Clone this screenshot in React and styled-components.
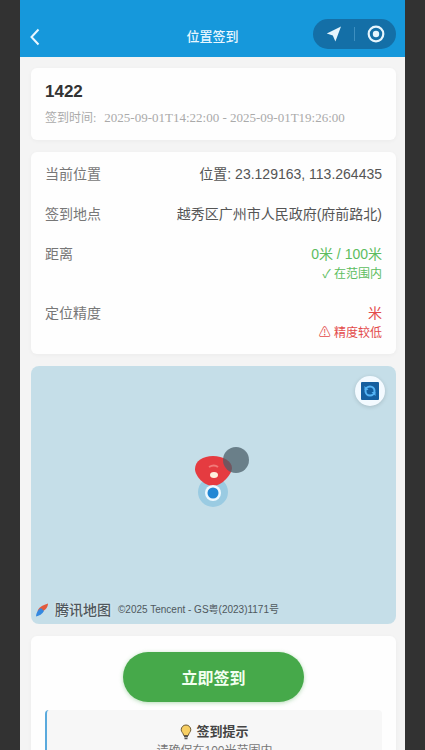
import React, { useState } from "react";
import styled, { createGlobalStyle } from "styled-components";

const GlobalStyle = createGlobalStyle`
  * {
    box-sizing: border-box;
  }
  body {
    margin: 0;
    background: #323232;
    font-family: "Liberation Sans", "Noto Sans CJK SC", sans-serif;
  }
  h1, h2, h3, p, dl, dd {
    margin: 0;
  }
  button {
    border: 0;
    padding: 0;
    font-family: inherit;
    cursor: pointer;
  }
`;

const Stage = styled.div`
  height: 100vh;
  padding: 0 20px;
  overflow-y: auto;
  scrollbar-width: none;
`;

const Screen = styled.div`
  min-height: 100%;
  background: #f4f4f4;
`;

const NavBar = styled.header`
  display: grid;
  grid-template-columns: 1fr auto 1fr;
  align-items: center;
  height: 57px;
  padding: 16px 9px 0;
  background: #1698db;
  color: #e9f7ff;
`;

const BackButton = styled.button`
  display: flex;
  width: 12px;
  background: none;
  color: inherit;
`;

const NavTitle = styled.h1`
  font-size: 13px;
  line-height: 18px;
  font-weight: 500;
`;

const Capsule = styled.div`
  justify-self: end;
  display: flex;
  align-items: center;
  height: 30px;
  margin-bottom: 6px;
  border-radius: 15px;
  background: #146fa7;
`;

const CapsuleButton = styled.button`
  display: flex;
  align-items: center;
  justify-content: center;
  width: 41px;
  height: 30px;
  background: none;
  color: #e6f5fd;
`;

const CapsuleLine = styled.span`
  width: 1px;
  height: 14px;
  background: #3d8fc0;
`;

const Content = styled.main`
  display: flex;
  flex-direction: column;
  gap: 12px;
  padding: 11px 9px 12px 11px;
`;

const Card = styled.section`
  padding: 12px 14px;
  border-radius: 6px;
  background: #fefefe;
  box-shadow: 0 1px 4px rgba(0, 0, 0, 0.04);
`;

const TaskName = styled.h2`
  margin-top: 2px;
  color: #333;
  font-size: 17px;
  line-height: 20px;
`;

const TaskTime = styled.p`
  display: flex;
  gap: 8px;
  margin: 8px 0 2px;
  color: #aaa;
  font-family: "Liberation Serif", "Noto Sans CJK SC", serif;
  font-size: 12px;
  line-height: 16px;
  white-space: nowrap;
`;

const TimeRange = styled.span`
  font-size: 13px;
`;

const InfoList = styled.dl`
  display: flex;
  flex-direction: column;
  gap: 20px;
`;

const InfoRow = styled.div`
  display: flex;
  justify-content: space-between;
  line-height: 20px;
  font-size: 14px;
`;

const InfoLabel = styled.dt`
  color: #777;
`;

const InfoValue = styled.dd`
  color: ${(props) => props.$color || "#555"};
  text-align: right;
`;

const Hint = styled.p`
  margin-bottom: -1px;
  font-size: 12px;
`;

const MapBox = styled.section`
  position: relative;
  height: 258px;
  border-radius: 8px;
  background: #c5dee8;
  overflow: hidden;
`;

const RefreshButton = styled.button`
  position: absolute;
  top: 10px;
  right: 11px;
  display: flex;
  align-items: center;
  justify-content: center;
  width: 30px;
  height: 30px;
  border-radius: 50%;
  background: #f3faff;
  box-shadow: 0 1px 4px rgba(0, 0, 0, 0.15);
`;

const Marker = styled.div`
  position: absolute;
  top: 75px;
  left: 50%;
  display: flex;
  width: 72px;
  margin-left: -36px;
`;

const MapCredit = styled.div`
  position: absolute;
  bottom: 4px;
  left: 3px;
  display: flex;
  align-items: center;
  gap: 5px;
  color: #4f585d;
  white-space: nowrap;
`;

const MapBrand = styled.span`
  font-size: 14px;
  line-height: 20px;
  font-weight: 500;
  text-shadow: 0 0 3px #eef5f8;
`;

const Copyright = styled.small`
  margin-left: 2px;
  font-size: 10px;
  line-height: 20px;
`;

const SignButton = styled.button`
  display: block;
  width: 54%;
  height: 50px;
  margin: 4px auto 8px;
  border-radius: 25px;
  background: #46a94a;
  box-shadow: 0 1px 4px rgba(70, 169, 74, 0.4);
  color: #f2fff0;
  font-size: 16px;
  font-weight: 700;
`;

const Tips = styled.div`
  padding: 12px;
  border-left: 2px solid #5aaadd;
  border-radius: 4px;
  background: #f7f7f7;
  text-align: center;
`;

const TipsTitle = styled.h3`
  display: flex;
  align-items: center;
  justify-content: center;
  gap: 4px;
  color: #444;
  font-size: 13px;
  line-height: 20px;
`;

const TipsText = styled.p`
  color: #777;
  font-size: 12px;
  line-height: 18px;
`;

const green = "#5cbd60";
const red = "#e34b4b";

const rows = [
  { label: "当前位置", value: "位置: 23.129163, 113.264435" },
  { label: "签到地点", value: "越秀区广州市人民政府(府前路北)" },
  { label: "距离", value: "0米 / 100米", hint: "✓ 在范围内", color: green },
  { label: "定位精度", value: "米", hint: "⚠ 精度较低", color: red },
];

export default function App() {
  const [signed, setSigned] = useState(false);

  return (
    <>
      <GlobalStyle />
      <Stage>
        <Screen>
          <NavBar>
            <BackButton aria-label="返回">
              <BackIcon />
            </BackButton>
            <NavTitle>位置签到</NavTitle>
            <Capsule>
              <CapsuleButton aria-label="定位">
                <ArrowIcon />
              </CapsuleButton>
              <CapsuleLine />
              <CapsuleButton aria-label="关闭">
                <TargetIcon />
              </CapsuleButton>
            </Capsule>
          </NavBar>
          <Content>
            <Card>
              <TaskName>1422</TaskName>
              <TaskTime>
                <span>签到时间:</span>
                <TimeRange>2025-09-01T14:22:00 - 2025-09-01T19:26:00</TimeRange>
              </TaskTime>
            </Card>
            <Card>
              <InfoList>
                {rows.map((row) => (
                  <InfoRow key={row.label}>
                    <InfoLabel>{row.label}</InfoLabel>
                    <InfoValue $color={row.color}>
                      {row.value}
                      {row.hint && <Hint>{row.hint}</Hint>}
                    </InfoValue>
                  </InfoRow>
                ))}
              </InfoList>
            </Card>
            <MapBox aria-label="地图">
              <RefreshButton aria-label="刷新">
                <RefreshIcon />
              </RefreshButton>
              <Marker>
                <MarkerIcon />
              </Marker>
              <MapCredit>
                <MapLogo />
                <MapBrand>腾讯地图</MapBrand>
                <Copyright>©2025 Tencent - GS粤(2023)1171号</Copyright>
              </MapCredit>
            </MapBox>
            <Card>
              <SignButton onClick={() => setSigned(true)} disabled={signed}>
                立即签到
              </SignButton>
              <Tips>
                <TipsTitle>
                  <BulbIcon />
                  签到提示
                </TipsTitle>
                <TipsText>请确保在100米范围内</TipsText>
              </Tips>
            </Card>
          </Content>
        </Screen>
      </Stage>
    </>
  );
}

function BackIcon() {
  return (
    <svg width="12" height="18" viewBox="0 0 12 18" fill="none">
      <path d="M9.5 1.5 2.5 9l7 7.5" stroke="currentColor" strokeWidth="2" />
    </svg>
  );
}

function ArrowIcon() {
  return (
    <svg width="16" height="16" viewBox="0 0 16 16">
      <path d="M15 .5.8 7.6l6 1.9 2.600 6z" fill="currentColor" />
    </svg>
  );
}

function TargetIcon() {
  return (
    <svg width="18" height="18" viewBox="0 0 18 18">
      <circle cx="9" cy="9" r="7.3" fill="none" stroke="currentColor" strokeWidth="2.2" />
      <circle cx="9" cy="9" r="3.2" fill="currentColor" />
    </svg>
  );
}

function RefreshIcon() {
  return (
    <svg width="18" height="18" viewBox="0 0 18 18">
      <rect width="18" height="18" rx="1" fill="#155f9f" />
      <circle cx="9" cy="9" r="4.5" fill="none" stroke="#55b4f5" strokeWidth="2" />
      <path d="M3.5 4v4h4zM14.5 14v-4h-4z" fill="#55b4f5" />
    </svg>
  );
}

function MarkerIcon() {
  return (
    <svg width="72" height="72" viewBox="0 0 72 72">
      <circle cx="35" cy="51" r="15" fill="#9acbe2" />
      <path d="M17 28c0-8 8-13 18-13s19 5 19 12c0 6-10 18-19 18s-18-10-18-17z" fill="#e53b40" />
      <path d="M31 26q5-3 9 0" fill="none" stroke="#f17a78" strokeWidth="2" />
      <ellipse cx="36" cy="34" rx="4" ry="3" fill="#fff0dd" />
      <circle cx="58" cy="19" r="13" fill="#4b5f69" fillOpacity=".75" />
      <circle cx="35" cy="52" r="8" fill="#edf9ff" />
      <circle cx="35" cy="52" r="5.5" fill="#2187d4" />
    </svg>
  );
}

function MapLogo() {
  return (
    <svg width="16" height="16" viewBox="0 0 16 16">
      <path d="M14 1.5C8.5 3 4 6 3.5 9.5h5C11.5 8 14 5 14 1.5z" fill="#e25a3c" />
      <path d="M2 14.5C2 11.5 3.5 8 7 6l3 3c-1.500 3-5 5-8 5.500z" fill="#3488e0" />
    </svg>
  );
}

function BulbIcon() {
  return (
    <svg width="12" height="16" viewBox="0 0 12 16">
      <path
        d="M6 1a4.8 4.8 0 0 0-4.8 4.8c0 2.3 2.2 3.2 2.5 5.7h4.6c.3-2.5 2.5-3.4 2.5-5.7A4.8 4.8 0 0 0 6 1z"
        fill="#f7cf63"
        stroke="#6d5a35"
      />
      <path d="M4 12.5h4M4.5 14.5h3" stroke="#555" strokeWidth="1.5" />
    </svg>
  );
}
